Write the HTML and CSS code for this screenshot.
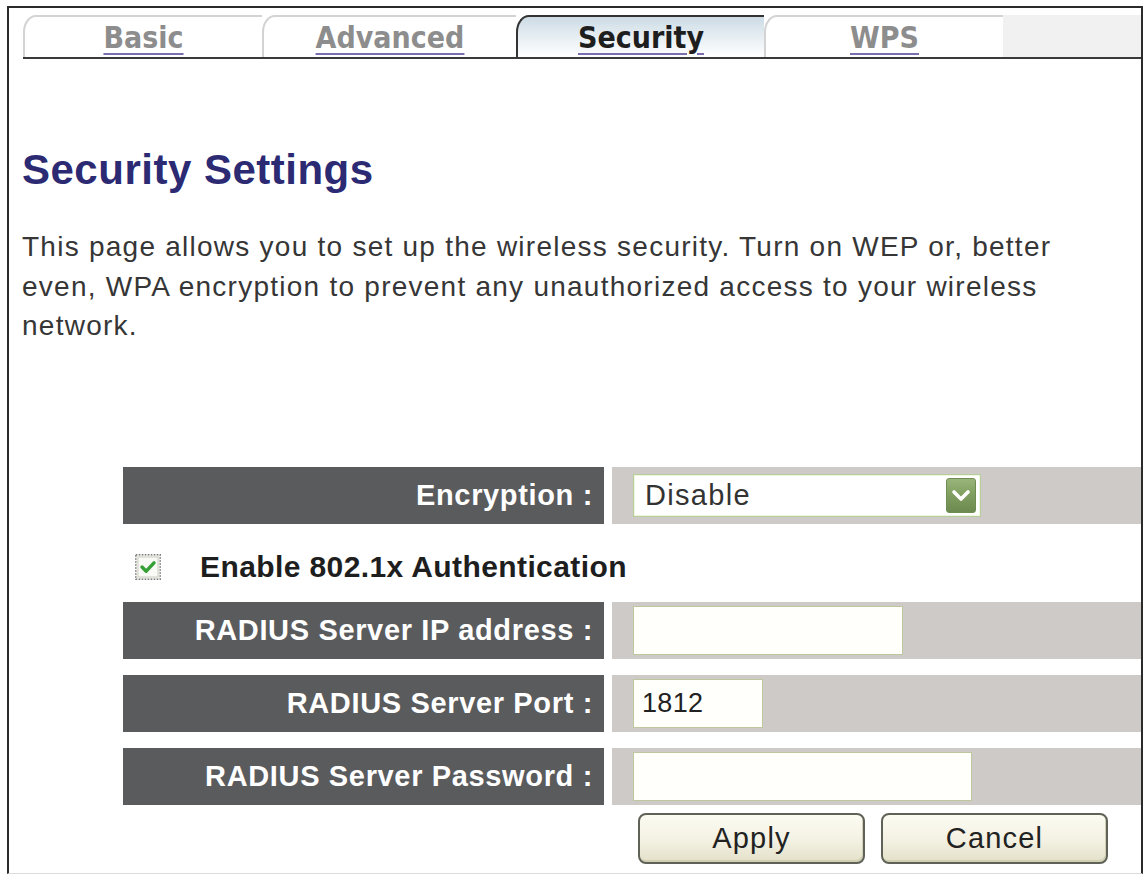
FILE: index.html
```html
<!DOCTYPE html>
<html lang="en">
<head>
<meta charset="utf-8">
<title>Security Settings</title>
<link rel="stylesheet" href="styles.css">
</head>
<body>
<div class="frame">
  <nav class="tabs">
    <a class="tab tab-basic" href="#"><span>Basic</span></a>
    <a class="tab tab-advanced" href="#"><span>Advanced</span></a>
    <a class="tab tab-security active" href="#"><span>Security</span></a>
    <a class="tab tab-wps" href="#"><span>WPS</span></a>
    <div class="tab-fill"></div>
  </nav>
  <main class="content">
    <h1 class="title">Security Settings</h1>
    <p class="intro">This page allows you to set up the wireless security. Turn on WEP or, better even, WPA encryption to prevent any unauthorized access to your wireless network.</p>

    <div class="form">
      <div class="row">
        <div class="label">Encryption :</div>
        <div class="field">
          <div class="select">
            <span class="select-text">Disable</span>
            <span class="arrow">
              <svg width="28" height="33" viewBox="0 0 28 33"><path d="M7 13 L14 20 L21 13" fill="none" stroke="#ffffff" stroke-width="3.6" stroke-linecap="round" stroke-linejoin="round"/></svg>
            </span>
          </div>
        </div>
      </div>

      <div class="check-row">
        <span class="checkbox">
          <svg width="26" height="26" viewBox="0 0 26 26">
            <rect x="0.75" y="0.75" width="24.5" height="24.5" fill="#f1f1ec" stroke="#7c7c7c" stroke-width="1.5" stroke-dasharray="1.6 1.4"/>
            <rect x="3" y="3" width="20" height="20" fill="#f9f9f5" stroke="#cfcfc6" stroke-width="1"/>
            <path d="M7 13 L11.2 17.2 L19 8.8" fill="none" stroke="#35a035" stroke-width="3.4" stroke-linecap="round" stroke-linejoin="round"/>
          </svg>
        </span>
        <span class="check-label">Enable 802.1x Authentication</span>
      </div>

      <div class="row">
        <div class="label">RADIUS Server IP address :</div>
        <div class="field"><div class="input input-ip"></div></div>
      </div>

      <div class="row row-spaced">
        <div class="label">RADIUS Server Port :</div>
        <div class="field"><div class="input input-port">1812</div></div>
      </div>

      <div class="row row-spaced">
        <div class="label">RADIUS Server Password :</div>
        <div class="field"><div class="input input-pass"></div></div>
      </div>

      <div class="actions">
        <div class="spacer"></div>
        <div class="buttons">
          <button class="btn" type="button">Apply</button>
          <button class="btn" type="button">Cancel</button>
        </div>
      </div>
    </div>
  </main>
</div>
</body>
</html>
```

FILE: styles.css
```css
html, body {
  margin: 0;
  padding: 0;
  background: #ffffff;
}

body {
  font-family: "Liberation Sans", Arial, sans-serif;
  color: #333333;
}

.frame {
  box-sizing: border-box;
  margin: 6px 0 0 7px;
  width: 1136px;
  height: 868px;
  border-top: 2px solid #2b2b2b;
  border-left: 2px solid #2b2b2b;
  border-right: 2px solid #2b2b2b;
  border-bottom: 1px solid #dcdcdc;
  background: #ffffff;
}

/* ---------- tabs ---------- */
.tabs {
  display: flex;
  margin: 7px 0 0 14px;
  height: 42px;
  border-bottom: 2px solid #3a3a3a;
}

.tab {
  box-sizing: border-box;
  flex: 0 0 auto;
  height: 42px;
  display: flex;
  justify-content: center;
  padding-top: 6px;
  border-top: 2px solid #d3d3d3;
  border-left: 2px solid #d3d3d3;
  border-top-left-radius: 13px 17px;
  background: #ffffff;
  font-family: "DejaVu Sans Condensed", "DejaVu Sans", sans-serif;
  font-stretch: condensed;
  font-weight: bold;
  font-size: 30px;
  line-height: 30px;
  color: #8d8d8d;
  text-decoration: underline;
  text-decoration-color: #7a6db0;
  text-decoration-thickness: 2px;
  text-underline-offset: 5px;
}

.tab-basic { width: 239px; }
.tab-advanced { width: 254px; }
.tab-security { width: 248px; }
.tab-wps { width: 239px; }

.tab.active {
  border-top-color: #333333;
  border-left-color: #333333;
  background: linear-gradient(to bottom, #cddbe5 0%, #e9f0f4 55%, #ffffff 100%);
  color: #1e1e1e;
}

.tab-fill {
  flex: 1 1 auto;
  background: #f1f1f1;
}

/* ---------- content ---------- */
.content {
  padding-left: 13px;
}

.title {
  margin: 87px 0 0 0;
  font-size: 42px;
  line-height: 48px;
  font-weight: bold;
  letter-spacing: 0.5px;
  color: #2b2a73;
}

.intro {
  margin: 33px 0 0 0;
  max-width: 1085px;
  font-size: 28px;
  line-height: 39.5px;
  letter-spacing: 1.25px;
  color: #363636;
}

/* ---------- form ---------- */
.form {
  display: flex;
  flex-direction: column;
  margin: 121px 0 0 101px;
}

.row {
  display: grid;
  grid-template-columns: 481px 1fr;
  column-gap: 8px;
  height: 57px;
}

.row-spaced {
  margin-top: 16px;
}

.label {
  display: flex;
  align-items: center;
  justify-content: flex-end;
  padding-right: 11px;
  background: #5a5b5d;
  color: #ffffff;
  font-weight: bold;
  font-size: 29px;
  letter-spacing: 0.65px;
  white-space: nowrap;
}

.field {
  display: flex;
  align-items: center;
  padding-left: 21px;
  background: #cdcac7;
}

.select {
  box-sizing: border-box;
  position: relative;
  display: flex;
  align-items: center;
  width: 348px;
  height: 43px;
  padding-left: 11px;
  border: 1px solid #b6cf98;
  box-shadow: inset 0 0 0 1px #eef6df;
  background: #ffffff;
}

.select-text {
  font-size: 29px;
  letter-spacing: 1.3px;
  color: #333333;
}

.arrow {
  position: absolute;
  right: 4px;
  top: 3px;
  box-sizing: border-box;
  width: 30px;
  height: 35px;
  border: 1px solid #6f8c52;
  border-radius: 3px;
  background: linear-gradient(to bottom, #9ab57a 0%, #7f9d5f 50%, #6c8a4f 100%);
  display: flex;
  align-items: center;
  justify-content: center;
}

.arrow svg {
  display: block;
}

.input {
  box-sizing: border-box;
  height: 49px;
  display: flex;
  align-items: center;
  padding-left: 8px;
  border: 1px solid #bfc79e;
  background: #fffffb;
  font-size: 27px;
  letter-spacing: 0.3px;
  color: #222222;
}

.input-ip { width: 270px; }
.input-port { width: 130px; }
.input-pass { width: 339px; }

.check-row {
  box-sizing: border-box;
  display: flex;
  align-items: center;
  height: 78px;
  padding: 8px 0 0 12px;
}

.checkbox {
  display: block;
  width: 26px;
  height: 26px;
}

.checkbox svg {
  display: block;
}

.check-label {
  margin-left: 39px;
  font-weight: bold;
  font-size: 30px;
  letter-spacing: 0.4px;
  color: #1e1e1e;
}

.actions {
  display: grid;
  grid-template-columns: 481px 1fr;
  column-gap: 8px;
  margin-top: 8px;
}

.buttons {
  display: flex;
  gap: 16px;
  padding-left: 26px;
}

.btn {
  box-sizing: border-box;
  width: 227px;
  height: 51px;
  border: 2px solid #5f6257;
  border-radius: 8px;
  background: linear-gradient(to bottom, #fcfbf2 0%, #f3f1e2 55%, #e3e0c9 100%);
  box-shadow: inset -1px -2px 0 #d2cfb4;
  font-family: "Liberation Sans", Arial, sans-serif;
  font-size: 29px;
  letter-spacing: 1.2px;
  color: #222222;
  padding: 0;
}
```
